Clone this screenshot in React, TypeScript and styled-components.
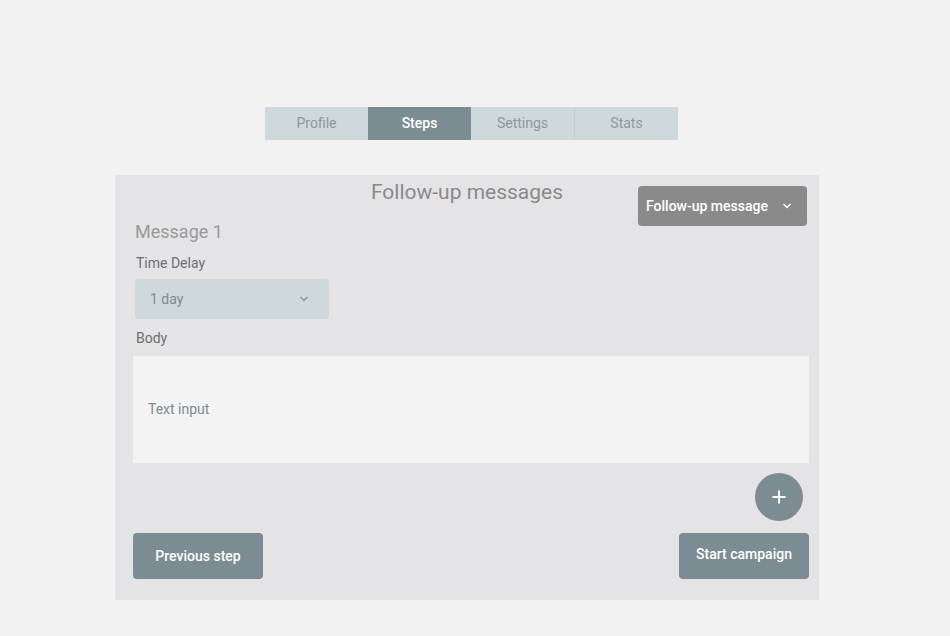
import React from "react";
import styled, { createGlobalStyle } from "styled-components";

const Global = createGlobalStyle`
  html, body { margin: 0; padding: 0; background: #f2f2f2; }
  body { font-family: Roboto, "Noto Sans", Arial, sans-serif; }
  * { box-sizing: border-box; }
`;

const Page = styled.div`
  width: 950px;
  height: 636px;
  padding: 107px 0 0 115px;
`;

const Tabs = styled.nav`
  display: flex;
  width: 413px;
  height: 33px;
  margin-left: 150px;
  margin-bottom: 35px;
  background: #cfd8dc;
`;

const Tab = styled.div<{ $active?: boolean; $divider?: boolean }>`
  flex: 1;
  display: flex;
  align-items: center;
  justify-content: center;
  padding-bottom: 1px;
  font-size: 14px;
  font-weight: ${(p) => (p.$active ? 500 : 400)};
  color: ${(p) => (p.$active ? "#ffffff" : "#8e999e")};
  background: ${(p) => (p.$active ? "#7b8c93" : "transparent")};
  border-left: ${(p) => (p.$divider ? "1px solid #c6d0d4" : "none")};
`;

const Panel = styled.section`
  width: 704px;
  height: 425px;
  background: #e4e4e6;
  padding: 5px 10px 21px 18px;
  display: flex;
  flex-direction: column;
`;

const Header = styled.div`
  display: grid;
  grid-template-columns: 1fr auto;
  grid-template-rows: 24px 22px;
  row-gap: 17px;
`;

const Title = styled.h2`
  grid-column: 1 / -1;
  grid-row: 1;
  margin: 0 0 0 -8px;
  text-align: center;
  font-size: 21px;
  line-height: 24px;
  font-weight: 400;
  color: #8a8a8a;
`;

const MessageTitle = styled.h3`
  grid-column: 1;
  grid-row: 2;
  margin: 0 0 0 2px;
  font-size: 18px;
  line-height: 22px;
  font-weight: 400;
  color: #9a9a9a;
`;

const TypeSelect = styled.button`
  grid-column: 2;
  grid-row: 1 / 3;
  align-self: start;
  margin: 6px 2px 0 0;
  width: 169px;
  height: 40px;
  border: none;
  border-radius: 4px;
  background: #8a8a8a;
  color: #ffffff;
  font-family: inherit;
  font-size: 14px;
  font-weight: 500;
  display: flex;
  align-items: center;
  padding: 0 12px 0 8px;
  gap: 14px;
`;

const Label = styled.div<{ $mt: number }>`
  margin: ${(p) => p.$mt}px 0 0 3px;
  font-size: 14px;
  line-height: 17px;
  color: #6f6f6f;
`;

const DelaySelect = styled.div`
  margin: 7px 0 0 2px;
  width: 194px;
  height: 40px;
  border-radius: 4px;
  background: #cfd8dc;
  display: flex;
  align-items: center;
  justify-content: space-between;
  padding: 0 20px 0 15px;
  font-size: 14px;
  color: #7b8c93;
`;

const TextArea = styled.div`
  margin-top: 9px;
  height: 107px;
  background: #f3f3f3;
  display: flex;
  align-items: center;
  padding: 0 0 1px 15px;
  font-size: 14px;
  color: #7b8c93;
`;

const AddRow = styled.div`
  display: flex;
  justify-content: flex-end;
  margin-top: 10px;
  padding-right: 6px;
`;

const AddButton = styled.button`
  width: 48px;
  height: 48px;
  border-radius: 50%;
  border: none;
  background: #7b8c93;
  display: flex;
  align-items: center;
  justify-content: center;
  padding: 0;
`;

const Footer = styled.div`
  display: flex;
  justify-content: space-between;
  margin-top: 12px;
`;

const ActionButton = styled.button<{ $raise?: boolean }>`
  width: 130px;
  height: 46px;
  border: none;
  border-radius: 4px;
  background: #7b8c93;
  color: #ffffff;
  font-family: inherit;
  font-size: 14px;
  font-weight: 500;
  padding: 0 0 ${(p) => (p.$raise ? "4px" : "0")} 0;
`;

const Chevron = ({ color }: { color: string }) => (
  <svg width="10" height="6" viewBox="0 0 10 6">
    <polyline points="1.5,1 5,4.5 8.5,1" fill="none" stroke={color} strokeWidth="1.4" />
  </svg>
);

export default function App() {
  return (
    <>
      <Global />
      <Page>
        <Tabs>
          <Tab>Profile</Tab>
          <Tab $active>Steps</Tab>
          <Tab>Settings</Tab>
          <Tab $divider>Stats</Tab>
        </Tabs>
        <Panel>
          <Header>
            <Title>Follow-up messages</Title>
            <MessageTitle>Message 1</MessageTitle>
            <TypeSelect>
              Follow-up message
              <Chevron color="#ffffff" />
            </TypeSelect>
          </Header>
          <Label $mt={12}>Time Delay</Label>
          <DelaySelect>
            1 day
            <Chevron color="#8a979c" />
          </DelaySelect>
          <Label $mt={11}>Body</Label>
          <TextArea>Text input</TextArea>
          <AddRow>
            <AddButton aria-label="Add message">
              <svg width="16" height="16" viewBox="0 0 16 16">
                <path d="M8 1.5v13M1.5 8h13" stroke="#ffffff" strokeWidth="2" />
              </svg>
            </AddButton>
          </AddRow>
          <Footer>
            <ActionButton>Previous step</ActionButton>
            <ActionButton $raise>Start campaign</ActionButton>
          </Footer>
        </Panel>
      </Page>
    </>
  );
}
